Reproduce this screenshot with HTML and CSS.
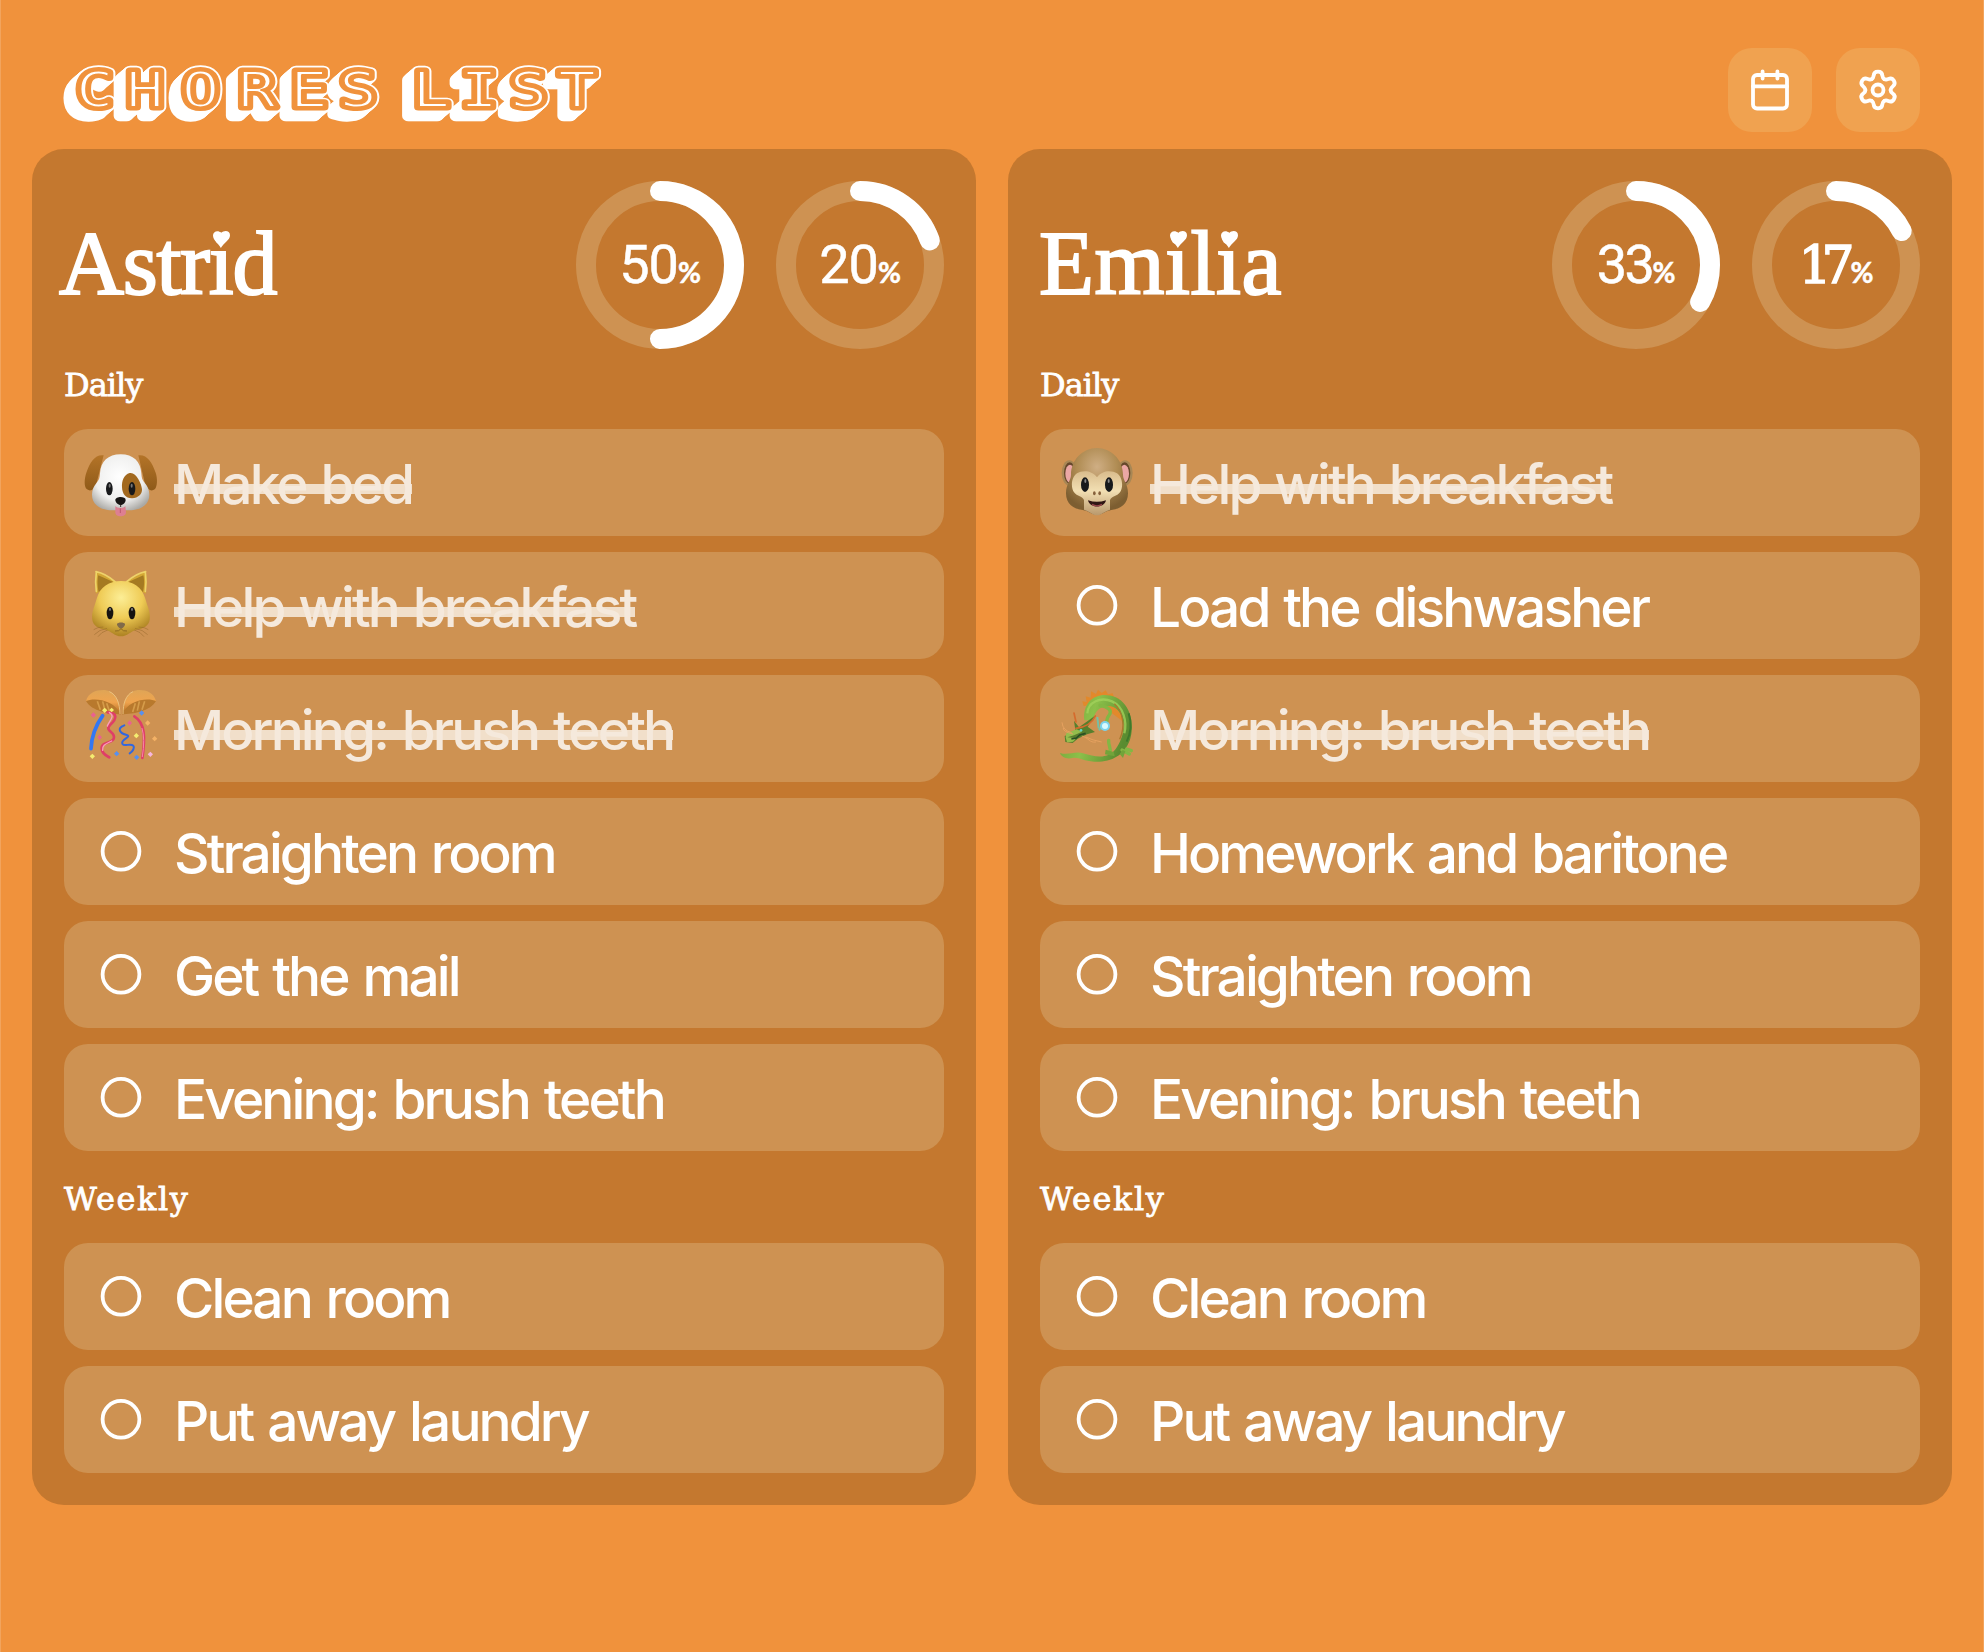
FILE: index.html
```
<!DOCTYPE html>
<html lang="en">
<head>
<meta charset="utf-8">
<title>Chores List</title>
<link rel="stylesheet" href="styles.css">
</head>
<body>
<svg class="sprite" aria-hidden="true">
  <defs>
    <radialGradient id="dogFace" cx=".48" cy=".4" r=".65"><stop offset="0" stop-color="#fff"/><stop offset=".65" stop-color="#efefee"/><stop offset="1" stop-color="#aaa9a5"/></radialGradient>
    <linearGradient id="dogEar" x1="0" y1="0" x2="0" y2="1"><stop offset="0" stop-color="#b47428"/><stop offset="1" stop-color="#8f5a19"/></linearGradient>
    <radialGradient id="catFace" cx=".5" cy=".3" r=".68"><stop offset="0" stop-color="#fcee96"/><stop offset=".55" stop-color="#efcb55"/><stop offset="1" stop-color="#b08524"/></radialGradient>
    <radialGradient id="monkeyFur" cx=".5" cy=".28" r=".65"><stop offset="0" stop-color="#cfae84"/><stop offset=".5" stop-color="#b08c53"/><stop offset="1" stop-color="#7d5e31"/></radialGradient>
    <linearGradient id="monkeyFace" x1="0" y1="0" x2="0" y2="1"><stop offset="0" stop-color="#d9bc8c"/><stop offset=".45" stop-color="#f2dfb3"/><stop offset="1" stop-color="#b9986c"/></linearGradient>
    <linearGradient id="shell" x1="0" y1="0" x2="0" y2="1"><stop offset="0" stop-color="#dfa556"/><stop offset=".5" stop-color="#f0a44e"/><stop offset="1" stop-color="#b06a20"/></linearGradient>
    <linearGradient id="scales" x1="0" y1="0" x2="1" y2=".3"><stop offset="0" stop-color="#6f9c34"/><stop offset=".5" stop-color="#8cc04a"/><stop offset="1" stop-color="#5a8c30"/></linearGradient>
  </defs>

  <symbol id="dog" viewBox="0 -9 270 270">
    <path d="M83 46C58 42 42 66 31 98c-6 18-8 42 2 50 11 8 21 1 28-16ZM187 46c25-4 41 20 52 52 6 18 5 42-3 50-10 8-22 1-29-16Z" fill="url(#dogEar)"/>
    <path d="M134 43c-38 0-60 22-62 57-1 16-3 20-10 28-9 10-14 22-14 36 0 31 28 47 62 47h48c34 0 62-16 62-47 0-14-5-26-14-36-7-8-9-12-10-28-2-35-24-57-62-57Z" fill="url(#dogFace)"/>
    <path d="M161 99c-17 4-24 24-23 43 1 21 12 34 31 33 17-1 30-12 29-27-1-17-18-53-37-49Z" fill="#a2691f"/>
    <ellipse cx="100" cy="146" rx="10" ry="20" fill="#18191b"/><ellipse cx="168" cy="146" rx="10" ry="20" fill="#18191b"/>
    <ellipse cx="101" cy="137" rx="3" ry="6" fill="#777"/><ellipse cx="167" cy="137" rx="3" ry="6" fill="#777"/>
    <path d="M118 198c4 8 27 8 30 0l2 18c0 9-7 13-16 13s-16-4-16-13Z" fill="#dd7f91"/>
    <path d="M133 205v14" stroke="#bd5b70" stroke-width="3"/>
    <path d="M118 180c0-11 31-12 31 0 0 9-10 15-15 15s-16-6-16-15Z" fill="#171514"/>
    <path d="M134 194v7" stroke="#3a2e28" stroke-width="3"/>
  </symbol>

  <symbol id="cat" viewBox="48 30 270 270">
    <path d="M108 64c-5 20-2 50 0 67l60-36ZM257 64c5 20 2 50 0 67l-60-36Z" fill="#d4a834"/>
    <path d="M115 76c-4 16-2 38 1 50l44-30ZM250 76c4 16 2 38-1 50l-44-30Z" fill="#a57a22"/>
    <path d="M108 65c20 4 42 17 58 31M257 65c-20 4-42 17-58 31M109 66q-4 30 0 58M256 66q4 30 0 58" fill="none" stroke="#eed369" stroke-width="5" stroke-linecap="round"/>
    <path d="M183 93c-35 0-64 19-73 53-8 28-16 40-13 63 2 17 17 26 39 30 17 4 29 20 47 20s30-16 47-20c22-4 37-13 39-30 3-23-5-35-13-63-9-34-38-53-73-53Z" fill="url(#catFace)"/>
    <ellipse cx="150" cy="189" rx="10" ry="19" fill="#161310"/><ellipse cx="216" cy="189" rx="10" ry="19" fill="#161310"/>
    <ellipse cx="150" cy="178" rx="3" ry="5" fill="#777"/><ellipse cx="216" cy="178" rx="3" ry="5" fill="#777"/>
    <path d="M171 222c3-6 21-6 24 0 1 6-8 14-12 14s-13-8-12-14Z" fill="#806a4a"/>
    <path d="M165 243q12 2 18-7 6 9 18 7" fill="none" stroke="#8f6a20" stroke-width="3"/>
    <path d="M141 235q-24 4-38 19M143 240q-20 6-29 20M130 231q-18 0-29 8M225 235q24 4 38 19M223 240q20 6 29 20M236 231q18 0 29 8" fill="none" stroke="#94662a" stroke-width="1.5"/>
  </symbol>

  <symbol id="confetti" viewBox="48 399 270 270">
    <path d="M78 453c7-26 32-34 56-33 29 2 47 30 48 73-32-7-58-20-104-40ZM288 453c-7-26-30-34-54-33-29 2-47 30-48 73 32-7 57-20 102-40Z" fill="url(#shell)"/>
    <path d="M78 453c25-12 86-3 104 40-34-1-87-9-104-40ZM288 453c-25-12-84-3-102 40 33-1 85-9 102-40Z" fill="#b8792d"/>
    <path d="M112 454l9 25m7-25 7 28m5-22 9 26M254 454l-8 25m-8-25-6 28m-6-22-8 26" stroke="#f3bf67" stroke-width="5" opacity=".5"/>
    <path d="M180 492c-1-32-10-58-32-67M189 492c0-32 9-58 30-67" fill="none" stroke="#e9c180" stroke-width="3"/>
    <g fill="none" stroke-linecap="round">
      <path d="M128 497c-17 24-33 53-35 99" stroke="#3377f2" stroke-width="11"/>
      <path d="M143 487c31 1 27 19 9 36-23 22 18 21 9 43-6 15-39 8-36 31 2 16 15 20 23 25" stroke="#df3f67" stroke-width="8"/>
      <path d="M148 488c20 10-2 26-6 40M155 573c-18 9-29 12-27 28" stroke="#fa9cbc" stroke-width="4"/>
      <path d="M193 526c-24 9-13 24 5 28 22 6-17 13-11 27 6 11 23-3 33 6 4 4 0 17-11 23" stroke="#3267df" stroke-width="6"/>
      <path d="M223 499c33 20 33 65 24 125" stroke="#df3f67" stroke-width="8"/>
      <path d="M246 535q10 31 1 85" stroke="#f786a6" stroke-width="3"/>
    </g>
    <path d="m245 481 8 8-8 8-8-8Zm-75 122 8 8-8 8-8-8Zm60 11 8 8-8 8-8-8Z" fill="#5890ee"/>
    <path d="m97 611 8 8-8 8-8-8Zm132-62 8 8-8 8-8-8Zm-95-76 8 8-8 8-8-8Zm21 0 7 7-7 7-7-7Z" fill="#f4ec70"/>
    <path d="m100 487 8 8-8 8-8-8Zm19 67 7 8-7 8-7-8Zm90-43 7 8-7 8-7-8Z" fill="#ea6190"/>
    <path d="m263 511 8 8-8 8-8-8Zm21 47 8 8-8 8-8-8Z" fill="#f4b266"/>
    <path d="m271 605 8 8-8 8-8-8Z" fill="#f7b6de"/>
  </symbol>

  <symbol id="monkey" viewBox="66 36 270 270">
    <ellipse cx="118" cy="144" rx="23" ry="38" fill="#a88755"/><ellipse cx="285" cy="144" rx="23" ry="38" fill="#a88755"/>
    <ellipse cx="119" cy="144" rx="17" ry="32" fill="#65472b"/><ellipse cx="284" cy="144" rx="17" ry="32" fill="#65472b"/>
    <ellipse cx="120" cy="146" rx="14" ry="27" fill="#eba7a5"/><ellipse cx="283" cy="146" rx="14" ry="27" fill="#eba7a5"/>
    <path d="M201 69c-42 0-78 35-78 80 0 18-15 27-15 56 0 32 22 47 50 50 16 2 28 15 43 15s27-13 43-15c28-3 50-18 50-50 0-29-15-38-15-56 0-45-36-80-78-80Z" fill="url(#monkeyFur)"/>
    <path d="M201 157c-17-24-46-21-60-12-18 12-19 43-9 57 8 12 28 12 30 24v28c16 4 26 17 39 17s23-13 39-17v-28c2-12 22-12 30-24 10-14 9-45-9-57-14-9-43-12-60 12Z" fill="url(#monkeyFace)"/>
    <ellipse cx="165" cy="179" rx="12" ry="22" fill="#17191b"/><ellipse cx="237" cy="179" rx="12" ry="22" fill="#17191b"/>
    <ellipse cx="166" cy="168" rx="3" ry="6" fill="#888"/><ellipse cx="236" cy="168" rx="3" ry="6" fill="#888"/>
    <ellipse cx="193" cy="205" rx="4" ry="6" fill="#86613c"/><ellipse cx="209" cy="205" rx="4" ry="6" fill="#86613c"/>
    <path d="M174 226q27 9 54 0c-5 25-49 25-54 0Z" fill="#301614"/><path d="M186 238q15 9 30 0" stroke="#99454a" stroke-width="4" fill="none"/>
  </symbol>

  <symbol id="dragon" viewBox="0 9 270 270">
    <path d="M95 78l-4-14 13 2-3-17 15 4 1-19 15 8 6-13 11 10 12-8 7 12 14-3 4 12 14 2 1 12 12 6-1 12 9 9-3 12 8 12-4 14-80-60Z" fill="#e2892b"/>
    <path d="M97 121C90 58 143 31 191 52c47 22 57 86 43 127-18 49-58 68-107 66-36-2-47-15-66-11-18 4-33-3-37-15 26 8 45-7 69 1 43 14 78 15 98-13 27-37 34-87 6-117-22-23-69-12-73 31Z" fill="url(#scales)"/>
    <path d="M106 100c2-35 40-50 74-36 34 16 46 60 37 96" fill="none" stroke="#a3d35c" stroke-width="7" opacity=".75"/>
    <path d="M187 71c26 22 34 68 16 107" fill="none" stroke="#a87a2c" stroke-width="4"/>
    <path d="M230 100q14 43-6 85" fill="none" stroke="#3e792c" stroke-width="6"/>
    <path d="M144 76c19 4 40 12 27 30-8 10-8 21-6 34M170 181c-2 16 9 22 3 36M210 210l22 12M224 207l14 5" fill="none" stroke="#83b744" stroke-width="10" stroke-linecap="round"/>
    <path d="M161 209l24 7 3 13-29-6ZM203 222l9-12 8 4-7 20Z" fill="#72a43a"/>
    <path d="M70 151l-4-29 15 20 50-36-24 34 22 16-24 7-28 13-15 13-22-3-2-18 29-11Z" fill="#577f2d"/>
    <path d="M72 145c24-3 48-14 58-37M66 99l6 27" fill="none" stroke="#d56b2d" stroke-width="5" stroke-linecap="round"/>
    <path d="M43 160l31-12 16 7-24 11-20 6 27 3-10 10-18 2-4-15Z" fill="#95bd4d"/>
    <path d="M59 158q-27-6-29-31M63 162q-31-7-29-18M89 168c22 6 23 21 43 18M101 171q21 10 48 15" fill="none" stroke="#e9a462" stroke-width="2.5"/>
    <path d="M70 177l13-12 18-5M58 177l15-3" stroke="#294e25" stroke-width="5" fill="none"/>
    <circle cx="87" cy="151" r="4" fill="#60d4c7"/>
    <path d="M136 111l4 34M141 151l17-25" stroke="#75bfa6" stroke-width="6"/>
    <circle cx="159" cy="138" r="15" fill="#7bd3ed"/><circle cx="159" cy="138" r="9" fill="#d9faff"/>
  </symbol>

  <symbol id="ring" viewBox="0 0 90 90"><circle cx="45" cy="45.300" r="18.400" fill="none" stroke="#fff" stroke-width="3.800"/></symbol>
  <symbol id="heart" viewBox="0 0 16 16"><path d="M7.400 16C5.600 12 0 9 0 4.200 0 .6 4.500-1.200 7.900 1.900 10-.8 16-.8 16 4 16 8.800 10 11 7.400 16Z" fill="#fff"/></symbol>
</svg>

<div class="app">
  <header class="topbar">
    <h1 class="brand">
      <svg viewBox="64 48 560 84" role="img" aria-label="Chores List">
        <defs><text id="word" y="107" x="75.800 116 160.400 205.600 247.200 286.400 315 344.800 383.200 422.800 461.600">CHORES LIST</text></defs>
        <g class="extrude">
          <g transform="translate(-10 9) scale(1.25 1)"><use href="#word"/></g>
          <g transform="translate(-9 8) scale(1.25 1)"><use href="#word"/></g>
          <g transform="translate(-8 7) scale(1.25 1)"><use href="#word"/></g>
          <g transform="translate(-7 6) scale(1.25 1)"><use href="#word"/></g>
          <g transform="translate(-5.800 5) scale(1.25 1)"><use href="#word"/></g>
          <g transform="translate(-4.600 4) scale(1.25 1)"><use href="#word"/></g>
          <g transform="translate(-3.500 3) scale(1.25 1)"><use href="#word"/></g>
          <g transform="translate(-2.300 2) scale(1.25 1)"><use href="#word"/></g>
          <g transform="translate(-1.100 1) scale(1.25 1)"><use href="#word"/></g>
          <g transform="scale(1.25 1)"><use href="#word"/></g>
        </g>
        <g class="face" transform="scale(1.25 1)"><use href="#word"/></g>
        <g class="inline" transform="scale(1.25 1)"><use href="#word"/></g>
      </svg>
    </h1>
    <nav class="actions">
      <button class="action" aria-label="Calendar">
        <svg viewBox="-21 -21 42 42"><rect x="-17" y="-15" width="34" height="33.500" rx="4"/><path d="M-17-3.700h34M-7.400-18.500v7M7.400-18.500v7"/></svg>
      </button>
      <button class="action" aria-label="Settings">
        <svg viewBox="-21 -21 42 42">
          <defs><path id="lobe" d="M-6.300-10.900C-5-11.650-4.600-12.500-4.400-14.200-4.200-17-2.500-18.400 0-18.400S4.200-17 4.400-14.200C4.600-12.500 5-11.650 6.300-10.900"/></defs>
          <use href="#lobe"/><use href="#lobe" transform="rotate(60)"/><use href="#lobe" transform="rotate(120)"/><use href="#lobe" transform="rotate(180)"/><use href="#lobe" transform="rotate(240)"/><use href="#lobe" transform="rotate(300)"/>
          <circle r="5.500"/>
        </svg>
      </button>
    </nav>
  </header>

  <main class="people">
    <section class="card">
      <div class="person">
        <h2 class="name name-astrid">Astr<span class="dotted">i<svg class="heart"><use href="#heart"/></svg></span>d</h2>
        <div class="meters">
          <div class="meter"><svg viewBox="0 0 168 168"><circle class="track" cx="84" cy="84" r="74"/><circle class="value" cx="84" cy="84" r="74" pathLength="100" stroke-dasharray="50 100"/></svg><p class="percent">50<small>%</small></p></div>
          <div class="meter"><svg viewBox="0 0 168 168"><circle class="track" cx="84" cy="84" r="74"/><circle class="value" cx="84" cy="84" r="74" pathLength="100" stroke-dasharray="19.600 100"/></svg><p class="percent">20<small>%</small></p></div>
        </div>
      </div>
      <h3 class="period daily">Daily</h3>
      <ul class="chores">
        <li class="chore"><svg class="mark"><use href="#dog"/></svg><span class="label"><del>Make bed</del></span></li>
        <li class="chore"><svg class="mark"><use href="#cat"/></svg><span class="label"><del>Help with breakfast</del></span></li>
        <li class="chore"><svg class="mark"><use href="#confetti"/></svg><span class="label"><del>Morning: brush teeth</del></span></li>
        <li class="chore"><svg class="mark"><use href="#ring"/></svg><span class="label">Straighten room</span></li>
        <li class="chore"><svg class="mark"><use href="#ring"/></svg><span class="label">Get the mail</span></li>
        <li class="chore"><svg class="mark"><use href="#ring"/></svg><span class="label">Evening: brush teeth</span></li>
      </ul>
      <h3 class="period weekly">Weekly</h3>
      <ul class="chores">
        <li class="chore"><svg class="mark"><use href="#ring"/></svg><span class="label">Clean room</span></li>
        <li class="chore"><svg class="mark"><use href="#ring"/></svg><span class="label">Put away laundry</span></li>
      </ul>
    </section>

    <section class="card">
      <div class="person">
        <h2 class="name name-emilia">Em<span class="dotted">i<svg class="heart"><use href="#heart"/></svg></span>l<span class="dotted">i<svg class="heart"><use href="#heart"/></svg></span>a</h2>
        <div class="meters">
          <div class="meter"><svg viewBox="0 0 168 168"><circle class="track" cx="84" cy="84" r="74"/><circle class="value" cx="84" cy="84" r="74" pathLength="100" stroke-dasharray="33.333 100"/></svg><p class="percent tight">33<small>%</small></p></div>
          <div class="meter"><svg viewBox="0 0 168 168"><circle class="track" cx="84" cy="84" r="74"/><circle class="value" cx="84" cy="84" r="74" pathLength="100" stroke-dasharray="17.400 100"/></svg><p class="percent"><span class="slab">17</span><small>%</small></p></div>
        </div>
      </div>
      <h3 class="period daily">Daily</h3>
      <ul class="chores">
        <li class="chore"><svg class="mark"><use href="#monkey"/></svg><span class="label"><del>Help with breakfast</del></span></li>
        <li class="chore"><svg class="mark"><use href="#ring"/></svg><span class="label">Load the dishwasher</span></li>
        <li class="chore"><svg class="mark"><use href="#dragon"/></svg><span class="label"><del>Morning: brush teeth</del></span></li>
        <li class="chore"><svg class="mark"><use href="#ring"/></svg><span class="label">Homework and baritone</span></li>
        <li class="chore"><svg class="mark"><use href="#ring"/></svg><span class="label">Straighten room</span></li>
        <li class="chore"><svg class="mark"><use href="#ring"/></svg><span class="label">Evening: brush teeth</span></li>
      </ul>
      <h3 class="period weekly">Weekly</h3>
      <ul class="chores">
        <li class="chore"><svg class="mark"><use href="#ring"/></svg><span class="label">Clean room</span></li>
        <li class="chore"><svg class="mark"><use href="#ring"/></svg><span class="label">Put away laundry</span></li>
      </ul>
    </section>
  </main>
</div>
</body>
</html>
```
FILE: styles.css
```
:root {
  --page: #f0923c;
  --card: #c4782f;
  --row: #ce9252;
  --action: #f0a250;
}
* { box-sizing: border-box; }
body { margin: 0; background: var(--page); color: #fff; font-family: Inter, sans-serif; }
h1, h2, h3, p, ul { margin: 0; padding: 0; font-weight: 400; }
.sprite { display: block; width: 0; height: 0; }

.app {
  min-height: 1652px;
  padding: 48px 31px 0;
  border: solid #f2a45d;
  border-width: 0 1px;
}

.topbar { display: flex; justify-content: space-between; height: 101px; padding: 0 32px; }
.brand svg { display: block; width: 560px; height: 84px; overflow: visible; }
.brand text { font: 50.5px "DejaVu Sans Mono", monospace; text-anchor: middle; }
.brand g { stroke-linejoin: round; }
.extrude { fill: #fff; stroke: #fff; stroke-width: 10.4px; }
.face { fill: var(--page); stroke: var(--page); stroke-width: 7.2px; }
.inline { fill: #fff; stroke: var(--page); stroke-width: 2.2px; }

.actions { display: flex; gap: 24px; }
.action {
  display: grid;
  place-items: center;
  width: 84px;
  height: 84px;
  padding: 0;
  border: 0;
  border-radius: 24px;
  background: var(--action);
}
.action svg {
  width: 42px;
  height: 42px;
  fill: none;
  stroke: #fff;
  stroke-width: 3.8px;
  stroke-linecap: round;
  stroke-linejoin: round;
}

.people { display: grid; grid-template-columns: 1fr 1fr; gap: 32px; }
.card { padding: 32px; border-radius: 32px; background: var(--card); }
.person { display: flex; align-items: center; justify-content: space-between; height: 168px; }
.name {
  padding-bottom: 2px;
  font: 90px "Liberation Serif", serif;
  line-height: 104px;
  -webkit-text-stroke: 2px #fff;
}
.name-astrid { margin-left: -5px; letter-spacing: -1.3px; }
.name-emilia { margin-left: -1px; letter-spacing: .5px; }
.dotted { position: relative; }
.heart { position: absolute; top: 17px; left: 50%; width: 17px; height: 17px; margin-left: -8px; overflow: visible; }

.meters { display: flex; gap: 32px; }
.meter { display: grid; width: 168px; height: 168px; }
.meter > * { grid-area: 1 / 1; }
.meter circle { fill: none; stroke-width: 20px; }
.track { stroke: var(--row); }
.value { stroke: #fff; stroke-linecap: round; transform: rotate(-90deg); transform-origin: center; }
.percent { font: 400 54px Roboto, sans-serif; line-height: 168px; text-align: center; letter-spacing: -1px; -webkit-text-stroke: .5px #fff; }
.percent small { font: 700 28px Lato, sans-serif; line-height: 1; letter-spacing: 0; }
.tight { letter-spacing: -2.5px; }
.slab { font: 52px "DejaVu Serif", serif; line-height: 1; letter-spacing: -10px; margin-right: 6px; -webkit-text-stroke: 1.5px #fff; }

.period { height: 80px; font: 32px "DejaVu Serif", serif; line-height: 72px; -webkit-text-stroke: .8px #fff; }
.daily { letter-spacing: -1px; }
.weekly { margin-top: 12px; letter-spacing: 1.6px; }

.chores { display: grid; gap: 16px; list-style: none; }
.chore {
  display: flex;
  gap: 9px;
  height: 107px;
  padding: 8px 0 0 12px;
  border-radius: 24px;
  background: var(--row);
}
.mark { flex: none; width: 90px; height: 90px; }
.label { margin: -8px 0 0 -1px; font-size: 55px; font-weight: 500; line-height: 111px; letter-spacing: -2.9px; word-spacing: 3px; white-space: nowrap; }
.label del {
  color: #f5e9dc;
  text-decoration: none;
  background: linear-gradient(transparent 33px, #f1dfca 33px 43px, transparent 43px);
}
```
